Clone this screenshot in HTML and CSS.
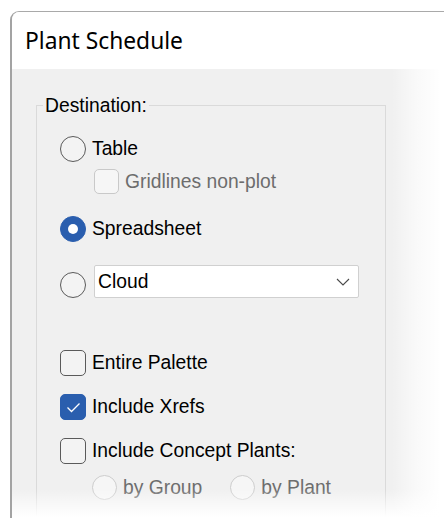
FILE: index.html
```html
<!DOCTYPE html>
<html lang="en">
<head>
<meta charset="utf-8">
<title>Plant Schedule</title>
<link rel="stylesheet" href="styles.css">
</head>
<body>
<div class="window">
  <div class="titlebar">Plant Schedule</div>
  <div class="content">
    <div class="group">
      <div class="legend">Destination:</div>

      <div class="row r-table"><span class="radio"></span><span>Table</span></div>
      <div class="row r-grid indent-cb"><span class="check disabled"></span><span class="muted">Gridlines non-plot</span></div>
      <div class="row r-sheet"><span class="radio on"></span><span>Spreadsheet</span></div>
      <div class="row r-cloud">
        <span class="radio"></span>
        <div class="select"><span>Cloud</span>
          <svg class="chev" width="14" height="8" viewBox="0 0 14 8"><polyline points="1,1 7,7 13,1" fill="none" stroke="#4a4a4a" stroke-width="1.1"/></svg>
        </div>
      </div>

      <div class="row r-palette"><span class="check"></span><span>Entire Palette</span></div>
      <div class="row r-xrefs"><span class="check on"><svg width="23" height="23" viewBox="0 0 23 23"><polyline points="5.5,11.5 9.5,15.5 17.5,7.5" fill="none" stroke="#fff" stroke-width="1.3"/></svg></span><span>Include Xrefs</span></div>
      <div class="row r-concept"><span class="check"></span><span>Include Concept Plants:</span></div>
      <div class="row r-by indent-rb">
        <span class="radio disabled"></span><span class="muted">by Group</span>
        <span class="radio disabled second"></span><span class="muted">by Plant</span>
      </div>
    </div>
  </div>
</div>
</body>
</html>
```
FILE: styles.css
```css
html, body {
  margin: 0;
  padding: 0;
  background: #fff;
  overflow: hidden;
  height: 518px;
}

body {
  font-family: "Liberation Sans", Arial, sans-serif;
  color: #000;
}

.window {
  position: relative;
  margin: 11px 0 0 10px;
  width: 434px;
  height: 507px;
  box-sizing: border-box;
  border-top: 1px solid #a9a9a9;
  border-left: 2px solid #a3a3a3;
  border-top-left-radius: 9px;
  background: #f0f0f0;
  overflow: hidden;
}

.window::after {
  content: "";
  position: absolute;
  top: -1px;
  left: -2px;
  right: 0;
  bottom: 0;
  pointer-events: none;
  background:
    linear-gradient(to right, rgba(255,255,255,0) 355px, #fff 392px) top left / 100% 1px no-repeat,
    linear-gradient(to right, rgba(255,255,255,0) 382px, rgba(255,255,255,0.6) 405px, #fff 430px),
    linear-gradient(to bottom, rgba(255,255,255,0) 478px, #fff 506px);
}

.titlebar {
  height: 57px;
  box-sizing: border-box;
  background: #fff;
  padding: 14px 0 0 13px;
  font-family: "Noto Sans", "Open Sans", sans-serif;
  font-size: 22.8px;
  line-height: 30px;
  color: #000;
}

.content {
  padding: 36px 0 0 24px;
}

.group {
  width: 350px;
  height: 420px;
  box-sizing: border-box;
  border: 1px solid #dadada;
  padding-left: 23px;
}

.legend {
  display: table;
  margin: -11px 0 0 -17px;
  padding: 0 2px;
  background: #f0f0f0;
  font-size: 19.3px;
  line-height: 22px;
}

.row {
  display: flex;
  align-items: center;
  gap: 6px;
  font-size: 19.3px;
  line-height: 22px;
}

.muted { color: #6d6d6d; }

.indent-cb { margin-left: 34px; }
.indent-rb { margin-left: 32px; }

.r-table   { margin-top: 19px; }
.r-grid    { margin-top: 7px; }
.r-sheet   { margin-top: 22px; }
.r-cloud   { margin-top: 23px; align-items: flex-end; gap: 8px; }
.r-palette { margin-top: 52px; }
.r-xrefs   { margin-top: 18px; }
.r-concept { margin-top: 18px; }
.r-by      { margin-top: 11px; }

.radio {
  flex: none;
  width: 26px;
  height: 26px;
  box-sizing: border-box;
  border: 1.5px solid #5a5a5a;
  border-radius: 50%;
  background: #f3f3f3;
  display: grid;
  place-items: center;
}

.radio.on {
  background: #2a5eae;
  border-color: #2a5eae;
}

.radio.on::after {
  content: "";
  width: 10px;
  height: 10px;
  border-radius: 50%;
  background: #fff;
}

.radio.disabled {
  width: 25px;
  height: 25px;
  border-color: #cdcdcd;
  background: #f6f6f6;
}

.radio.second { margin-left: 22px; }

.check {
  flex: none;
  width: 26px;
  height: 26px;
  box-sizing: border-box;
  border: 1.5px solid #5a5a5a;
  border-radius: 5px;
  background: #f3f3f3;
  display: grid;
  place-items: center;
}

.check.on {
  background: #2a5eae;
  border-color: #2a5eae;
}

.check.disabled {
  width: 25px;
  height: 25px;
  border-color: #c9c9c9;
  background: #f6f6f6;
}

.select {
  width: 265px;
  height: 33px;
  box-sizing: border-box;
  border: 1px solid #d0d0d0;
  border-radius: 2px;
  background: #fff;
  display: flex;
  align-items: center;
  justify-content: space-between;
  padding: 0 8px 0 3px;
}

.chev { display: block; margin-top: 1px; }
```
